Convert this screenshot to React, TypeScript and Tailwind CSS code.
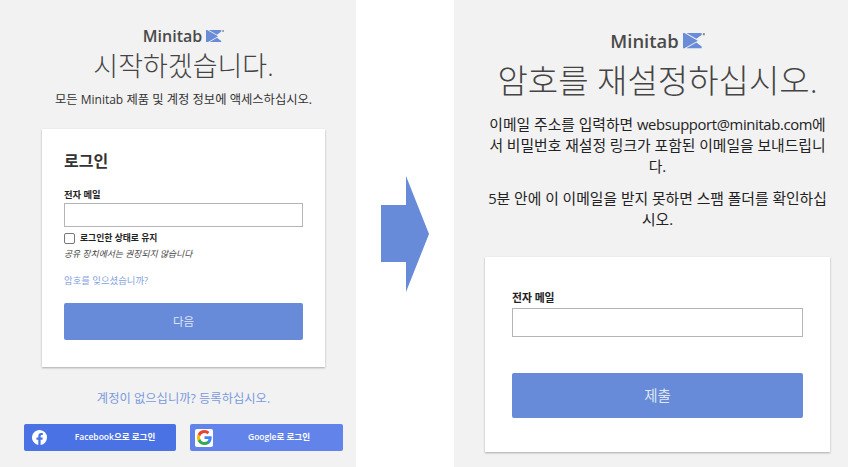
const FONT = "font-['Open_Sans','Noto_Sans_CJK_KR',sans-serif]";

// Minitab mark: three blue pieces split by a thin white chevron, plus the small dot
function LogoMark({ size }: { size: number }) {
  return (
    <svg width={size} height={(size * 16) / 23} viewBox="0 0 23 16" aria-hidden="true">
      <path d="M0 0H1.500L15.500 8L1.500 16H0Z" fill="#6a8cd8" />
      <path d="M3.500 0H19.500V2L14 6Z" fill="#6a8cd8" />
      <path d="M14 10L19.500 14V16H3.500Z" fill="#6a8cd8" />
      <circle cx="21.800" cy="1.300" r="1.200" fill="#888" />
    </svg>
  );
}

function Logo({ className, size }: { className: string; size: number }) {
  return (
    <div className="flex items-center justify-center gap-[4px]">
      <span className={`font-['Open_Sans',sans-serif] font-semibold text-[#4a4a4a] ${className}`}>Minitab</span>
      <LogoMark size={size} />
    </div>
  );
}

function FacebookGlyph() {
  return (
    <svg width="15" height="15" viewBox="0 0 24 24" aria-hidden="true">
      <path
        fill="#fff"
        d="M24 12a12 12 0 1 0-13.900 11.900v-8.400H7.100V12h3V9.400c0-3 1.800-4.700 4.500-4.700 1.300 0 2.700.2 2.700.2v3h-1.500c-1.500 0-2 .9-2 1.900V12h3.400l-.5 3.500h-2.900v8.400A12 12 0 0 0 24 12Z"
      />
    </svg>
  );
}

function GoogleGlyph() {
  return (
    <svg width="15" height="15" viewBox="0 0 24 24" aria-hidden="true">
      <path fill="#4285f4" d="M23.500 12.300c0-.8-.1-1.600-.2-2.300H12v4.500h6.500a5.500 5.500 0 0 1-2.400 3.600v3h3.900c2.200-2.100 3.500-5.200 3.500-8.800Z" />
      <path fill="#34a853" d="M12 24c3.200 0 6-1.100 8-2.900l-3.900-3c-1.100.7-2.500 1.200-4.100 1.200-3.100 0-5.800-2.100-6.700-5H1.300v3.100A12 12 0 0 0 12 24Z" />
      <path fill="#fbbc05" d="M5.300 14.300a7.200 7.200 0 0 1 0-4.600V6.600h-4a12 12 0 0 0 0 10.800l4-3.100Z" />
      <path fill="#ea4335" d="M12 4.800c1.800 0 3.300.6 4.600 1.800l3.400-3.400A11.700 11.700 0 0 0 12 0 12 12 0 0 0 1.300 6.600l4 3.100c.9-2.800 3.600-4.900 6.700-4.900Z" />
    </svg>
  );
}

function EmailField({ height, labelClass }: { height: string; labelClass: string }) {
  return (
    <div className="flex flex-col">
      <label className={`font-bold text-[#222] ${labelClass}`}>전자 메일</label>
      <div className={`border border-[#b5b5b5] bg-white ${height}`} />
    </div>
  );
}

function LoginPanel() {
  return (
    <section className="flex h-[467px] w-[356px] shrink-0 flex-col items-center bg-[#f2f2f2] pl-[11px] pt-[26px]">
      <Logo className="text-[16px] leading-[20px]" size={18} />
      <h1 className="mt-[2px] text-[27px] font-extralight leading-[36px] text-[#444]">시작하겠습니다.</h1>
      <p className="mt-[6px] text-[12.300px] leading-[20px] text-[#333]">
        모든 <span className="text-[12px]">Minitab</span> 제품 및 계정 정보에 액세스하십시오.
      </p>

      <div className="mt-[19px] flex h-[238px] w-[283px] flex-col bg-white px-[22px] pt-[20px] shadow-[0_1px_2px_rgba(0,0,0,0.3)]">
        <h2 className="text-[16px] font-bold leading-[24px] text-[#333]">로그인</h2>
        <div className="mt-[13px]">
          <EmailField height="h-[24px]" labelClass="text-[9.300px] leading-[17px]" />
        </div>
        <div className="mt-[5px] flex items-center gap-[5px]">
          <span className="h-[11px] w-[11px] rounded-[2px] border border-[#777] bg-white" />
          <span className="text-[8.800px] font-bold leading-[12px] text-[#222]">로그인한 상태로 유지</span>
        </div>
        <p className="mt-[3px] text-[8.800px] italic leading-[14px] text-[#444]">공유 장치에서는 권장되지 않습니다</p>
        <a className="mt-[13px] text-[9.400px] leading-[14px] text-[#84a2e0]">암호를 잊으셨습니까?</a>
        <button className="mt-[15px] h-[37px] w-full rounded-[2px] bg-[#678bd8] text-[11.500px] text-[#dfe6f7]">다음</button>
      </div>

      <a className="mt-[22px] text-[12.300px] leading-[20px] text-[#7a9ade]">계정이 없으십니까? 등록하십시오.</a>

      <div className="mt-[15px] flex gap-[14px]">
        <button className="flex h-[27px] w-[152px] items-center rounded-[2px] bg-[#4a72e4] text-[8.500px] font-semibold text-white">
          <span className="flex w-[30px] justify-center">
            <FacebookGlyph />
          </span>
          <span className="flex-1 text-center">Facebook으로 로그인</span>
        </button>
        <button className="flex h-[27px] w-[153px] items-center rounded-[2px] bg-[#6284ea] text-[8.500px] font-semibold text-white">
          <span className="ml-[5px] flex h-[18px] w-[18px] items-center justify-center rounded-[2px] bg-white">
            <GoogleGlyph />
          </span>
          <span className="flex-1 pl-[2px] text-center">Google로 로그인</span>
        </button>
      </div>
    </section>
  );
}

function ResetPanel() {
  return (
    <section className="flex h-[467px] w-[394px] shrink-0 flex-col items-center bg-[#f2f2f2] pl-[13px] pt-[30px]">
      <Logo className="text-[18.400px] leading-[22px]" size={22} />
      <h1 className="mt-[9px] text-[33px] font-extralight leading-[40px] text-[#444]">암호를 재설정하십시오.</h1>
      <div className="mt-[13px] w-[345px] text-center text-[14.800px] leading-[21px] text-[#222]">
        <p>
          이메일 주소를 입력하면 <span className="tracking-[-0.36px]">websupport@minitab.com</span>에서 비밀번호 재설정 링크가 포함된 이메일을 보내드립니다.
        </p>
        <p className="mt-[11px]">5분 안에 이 이메일을 받지 못하면 스팸 폴더를 확인하십시오.</p>
      </div>

      <div className="mt-[27px] flex h-[195px] w-[345px] flex-col bg-white px-[27px] pt-[30px] shadow-[0_1px_2px_rgba(0,0,0,0.3)]">
        <EmailField height="h-[29px]" labelClass="text-[10.800px] leading-[21px]" />
        <button className="mt-[36px] h-[45px] w-full rounded-[2px] bg-[#678bd8] text-[14.500px] text-[#dfe6f7]">제출</button>
      </div>
    </section>
  );
}

export default function App() {
  return (
    <div className={`flex h-[467px] w-[848px] overflow-hidden bg-white ${FONT}`}>
      <LoginPanel />
      <div className="flex flex-1 items-start justify-center pt-[176px]">
        <svg width="48" height="116" viewBox="0 0 48 116" aria-hidden="true">
          <path d="M0 29H25V0L48 58L25 116V86H0Z" fill="#678bd8" />
        </svg>
      </div>
      <ResetPanel />
    </div>
  );
}
